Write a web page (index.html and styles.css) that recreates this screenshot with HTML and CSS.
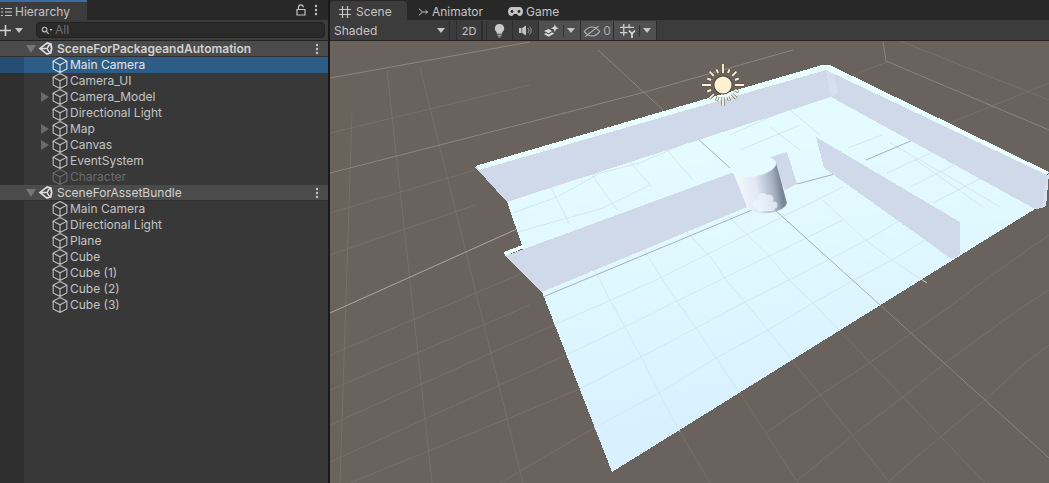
FILE: index.html
```html
<!DOCTYPE html>
<html lang="en">
<head>
<meta charset="utf-8">
<title>Unity Editor</title>
<link rel="stylesheet" href="styles.css">
</head>
<body>
<svg class="defs" width="0" height="0" aria-hidden="true">
  <defs>
    <symbol id="cube" viewBox="1 1 14 14">
      <path d="M8 1.5 14 4.6V11.4L8 14.5 2 11.4V4.6ZM2 4.6 8 7.8 14 4.6M8 7.8V14.5" fill="none" stroke="currentColor" stroke-width=".95"/>
    </symbol>
    <symbol id="unity" viewBox="0 0 16 16">
      <path d="M9.6 1 14.6 2.4 15.6 8 14.4 13.4 9.4 15 .6 8Z M9 3.6 4.4 7.2H9.2L11.6 3.2 9 3.6ZM4.4 8.8 9 12.4 11.6 12.8 9.2 8.8ZM10.6 8 12.8 11.6 13.6 8 12.8 4.4Z" fill="currentColor" fill-rule="evenodd"/>
    </symbol>
    <symbol id="kebab" viewBox="0 0 4 12">
      <circle cx="2" cy="2" r="1.2" fill="currentColor"/><circle cx="2" cy="6" r="1.2" fill="currentColor"/><circle cx="2" cy="10" r="1.2" fill="currentColor"/>
    </symbol>
  </defs>
</svg>
<div class="app">
  <section class="hier">
    <div class="tabs">
      <div class="tab tab-hier">
        <svg class="ico-list" viewBox="0 0 12 10"><path d="M0 1.5H2M4 1.5H11M0 5H2M4 5H11M0 8.5H2M4 8.5H11" stroke="#c4c4c4" stroke-width="1.2" fill="none"/></svg>
        <span>Hierarchy</span>
      </div>
      <div class="tab-tools">
        <svg class="ico-lock" viewBox="0 0 10 12"><path d="M2.5 5V3.2a2.4 2.4 0 0 1 4.8 0M1 5.5H9V11H1Z" fill="none" stroke="#c4c4c4" stroke-width="1.2"/></svg>
        <svg class="ico-kebab"><use href="#kebab"/></svg>
      </div>
    </div>
    <div class="hier-bar">
      <svg class="ico-plus" viewBox="0 0 11 11"><path d="M5.5 0V11M0 5.5H11" stroke="#d2d2d2" stroke-width="1.6"/></svg>
      <i class="caret"></i>
      <div class="search">
        <svg class="ico-search" viewBox="0 0 12 9"><circle cx="3.6" cy="3.6" r="2.3" fill="none" stroke="#c4c4c4" stroke-width="1.1"/><path d="M5.4 5.4 7.6 7.8" stroke="#c4c4c4" stroke-width="1.2"/><path d="M8.4 3H11.6L10 5Z" fill="#c4c4c4"/></svg>
        <span>All</span>
      </div>
    </div>
    <div class="tree">
      <div class="scene-row bold"><i class="open"></i><svg class="ico-unity"><use href="#unity"/></svg><span class="grow">SceneForPackageandAutomation</span><svg class="ico-kebab"><use href="#kebab"/></svg></div>
      <div class="row selected"><i class="slot"></i><svg class="ico-cube"><use href="#cube"/></svg><span>Main Camera</span></div>
      <div class="row"><i class="slot"></i><svg class="ico-cube"><use href="#cube"/></svg><span>Camera_UI</span></div>
      <div class="row"><i class="slot closed"></i><svg class="ico-cube"><use href="#cube"/></svg><span>Camera_Model</span></div>
      <div class="row"><i class="slot"></i><svg class="ico-cube"><use href="#cube"/></svg><span>Directional Light</span></div>
      <div class="row"><i class="slot closed"></i><svg class="ico-cube"><use href="#cube"/></svg><span>Map</span></div>
      <div class="row"><i class="slot closed"></i><svg class="ico-cube"><use href="#cube"/></svg><span>Canvas</span></div>
      <div class="row"><i class="slot"></i><svg class="ico-cube"><use href="#cube"/></svg><span>EventSystem</span></div>
      <div class="row inactive"><i class="slot"></i><svg class="ico-cube"><use href="#cube"/></svg><span>Character</span></div>
      <div class="scene-row"><i class="open"></i><svg class="ico-unity"><use href="#unity"/></svg><span class="grow">SceneForAssetBundle</span><svg class="ico-kebab"><use href="#kebab"/></svg></div>
      <div class="row"><i class="slot"></i><svg class="ico-cube"><use href="#cube"/></svg><span>Main Camera</span></div>
      <div class="row"><i class="slot"></i><svg class="ico-cube"><use href="#cube"/></svg><span>Directional Light</span></div>
      <div class="row"><i class="slot"></i><svg class="ico-cube"><use href="#cube"/></svg><span>Plane</span></div>
      <div class="row"><i class="slot"></i><svg class="ico-cube"><use href="#cube"/></svg><span>Cube</span></div>
      <div class="row"><i class="slot"></i><svg class="ico-cube"><use href="#cube"/></svg><span>Cube (1)</span></div>
      <div class="row"><i class="slot"></i><svg class="ico-cube"><use href="#cube"/></svg><span>Cube (2)</span></div>
      <div class="row"><i class="slot"></i><svg class="ico-cube"><use href="#cube"/></svg><span>Cube (3)</span></div>
    </div>
  </section>

  <section class="scene">
    <div class="tabs">
      <div class="tab tab-scene">
        <svg class="ico-grid" viewBox="0 0 12 12"><path d="M3.5 0V12M8.5 0V12M0 3.5H12M0 8.5H12" stroke="#c4c4c4" stroke-width="1.2"/></svg>
        <span>Scene</span>
      </div>
      <div class="tab tab-anim">
        <svg class="ico-anim" viewBox="0 0 12 10"><path d="M1 1 5.5 5 1 9M5.5 5H11.5M9 2.8 11.5 5 9 7.2" fill="none" stroke="#c4c4c4" stroke-width="1.2"/></svg>
        <span>Animator</span>
      </div>
      <div class="tab tab-game">
        <svg class="ico-game" viewBox="0 0 15 9"><path d="M3.5 0H11.5C13.5 0 15 2 15 4.5S13.5 9 11.5 9C10 9 9.5 7 8.8 7H6.2C5.5 7 5 9 3.5 9 1.5 9 0 7 0 4.5S1.5 0 3.5 0Z" fill="#c4c4c4"/><circle cx="4" cy="4.5" r="1.4" fill="#282828"/><circle cx="11" cy="4.5" r="1.4" fill="#282828"/></svg>
        <span>Game</span>
      </div>
    </div>
    <div class="scene-bar">
      <div class="btn btn-shaded"><span>Shaded</span><i class="caret"></i></div>
      <div class="sep-gap"></div>
      <div class="btn btn-2d"><span>2D</span></div>
      <div class="sep-gap sep-2"></div>
      <div class="btn btn-light"><svg viewBox="0 0 10 13" class="ico-bulb"><path d="M5 0A4.2 4.2 0 0 1 7.6 7.6V9H2.4V7.6A4.2 4.2 0 0 1 5 0ZM3 10H7V11H3ZM4 11.6H6V12.6H4Z" fill="#c8c8c8"/></svg></div>
      <div class="btn btn-audio"><svg viewBox="0 0 13 11" class="ico-audio"><path d="M0 3H2.5V8H0ZM3.2 3 7 .5V10.5L3.2 8Z" fill="#c4c4c4"/><path d="M8.6 3a3 3 0 0 1 0 5M10.4 1.6a5 5 0 0 1 0 7.8" fill="none" stroke="#9a9a9a" stroke-width="1"/></svg></div>
      <div class="btn btn-fx on"><svg viewBox="0 0 14 12" class="ico-fx"><path d="M0 6 4 4.2 7 6 4 8ZM0 8.6 2 7.8 4 9 7 7.2 9 8.2 4 11Z" fill="#d8d8d8"/><path d="M9.5 0 10.4 2.6 13 3.5 10.4 4.4 9.5 7 8.6 4.4 6 3.5 8.6 2.6Z" fill="#d8d8d8"/></svg><b class="vline"></b><i class="caret"></i></div>
      <div class="btn btn-hide on"><svg viewBox="0 0 16 11" class="ico-eye"><path d="M1 6C3 3 5.2 1.8 8 1.8S13 3 15 6C13 8.6 11 10 8 10S3 8.6 1 6ZM2 10.5 14 1" fill="none" stroke="#b4b4b4" stroke-width="1"/></svg><span>0</span></div>
      <div class="btn btn-gizmo on"><svg viewBox="0 0 15 13" class="ico-giz"><path d="M3.5 0V11M8.5 0V4M0 3H13M0 8H7" stroke="#d0d0d0" stroke-width="1.2" fill="none"/><path d="M8.5 6 11.2 9.2 14 6M11.2 9V13" stroke="#e0e0e0" stroke-width="1.5" fill="none"/></svg><b class="vline"></b><i class="caret"></i></div>
    </div>
    <svg class="view" viewBox="330 41 719 442" preserveAspectRatio="none">
      <defs>
        <linearGradient id="floor" gradientUnits="userSpaceOnUse" x1="700" y1="150" x2="740" y2="440">
          <stop offset="0" stop-color="#e4fcff"/><stop offset="1" stop-color="#d8f0ff"/>
        </linearGradient>
        <linearGradient id="cyl" gradientUnits="userSpaceOnUse" x1="738" y1="195" x2="786" y2="188">
          <stop offset="0" stop-color="#f2f8ff"/><stop offset=".4" stop-color="#e2e8f4"/><stop offset=".75" stop-color="#a4b0c2"/><stop offset=".92" stop-color="#74828f"/><stop offset="1" stop-color="#8c98a8"/>
        </linearGradient>
      </defs>
      <rect x="330" y="41" width="719" height="442" fill="#6a625c"/>
      <g class="g-faint">
        <path d="M352 113 340 483M387 70 432 483M420 67 523 483M330 133 530 85M330 213 475 170M330 255 475 205M330 355 530 270M330 390 530 305M330 425 554 325M330 462 566 355M350 483 580 389M500 483 594 428"/>
        <path d="M710 483 680 432M798 483 740 393M890 483 792 360M985 483 839 330M798 480 853 435 903 397 945 363 1018 310 1049 290M890 480 940 437 985 400 1025 363 1049 345M766 433 820 395 869 363 913 332 948 308 985 280 1049 235"/>
        <path d="M900 41 1049 100M950 123 1049 83M853 75 887 62"/>
      </g>
      <g class="g-main">
        <path d="M598 50 663 110M330 173 530 122 645 92 793 50M330 78 530 42M883 42 886 61 1049 130M880 305 1049 458"/>
      </g>
      <path class="g-bright" d="M330 313 517 229"/>
      <polygon points="507,202 831,97 1035,209 612,472 542,292 522,245" fill="url(#floor)" shape-rendering="crispEdges"/>
      <g class="g-floor">
        <path d="M554 325 611 300 656 280 700 258 770 223 843 187M566 355 625 327 677 301 720 280 767 257 843 220M580 389 641 357 696 328 745 302 789 280 867 240 917 210M594 428 659 393 716 358 768 330 813 303 854 280 892 260 950 225"/>
        <path d="M593 267 610 300 625 327 641 357 659 393 680 432M642 247 663 280 677 301 696 328 716 358 740 393M685 230 713 260 726 280 745 302 768 330 792 360M725 213 770 257 789 280 813 303 839 330M823 200 863 238 892 260 927 283M860 183 907 223 950 259"/>
        <path d="M513 213 557 197 597 175M518 232 603 208 650 185M592 175 640 163 693 140M730 135 770 117 823 97M740 150 800 125M848 148 882 135M887 173 933 152M910 187 960 162M933 203 983 177"/>
        <path d="M550 185 570 225M592 175 617 210M630 162 652 187M665 148 693 180M770 127 800 150M790 110 820 135M890 143 960 183 1000 207M913 158 983 207"/>
      </g>
      <g class="g-axis">
        <path d="M543 297 752 210M697 138 730 168M775 210 880 305M797 184 835 174M866 160 913 140"/>
      </g>
      <polygon points="768,158 787,152 797,184 785,190" fill="#cfd9ea" shape-rendering="crispEdges"/>
      <polygon points="475,167 826,68 831,97 507,202" fill="#cfd9ea" shape-rendering="crispEdges"/>
      <polygon points="826,68 1047,175 1042,208 1035,209 831,97" fill="#cfd9ea" shape-rendering="crispEdges"/>
      <polygon points="826,70 834,74 838,93 831,97" fill="#d6dff0" shape-rendering="crispEdges"/>
      <polygon points="1047,175 1049,174 1046,206 1042,208" fill="#d6e0f0" shape-rendering="crispEdges"/>
      <polygon points="475,166 822,65 830,65 1049,172 1047,175 826,70 479,170" fill="#e8feff" shape-rendering="crispEdges"/>
      <polygon points="816,137 960,222 960,255 952,259 824,168" fill="#cfd9ea" shape-rendering="crispEdges"/>
      <polygon points="505,256 734,172 747,207 542,292" fill="#cfd9ea" shape-rendering="crispEdges"/>
      <polygon points="504,252 522,245 524,248 505,256" fill="#e8feff" shape-rendering="crispEdges"/>
      <path d="M733 172 Q745 178 760 173 Q772 169 776 163 L787 203 Q785 210 770 213 Q755 215 747 207Z" fill="url(#cyl)"/>
      <ellipse cx="754" cy="167" rx="22.5" ry="9.5" transform="rotate(-11 754 167)" fill="#e6fbff"/>
      <g fill="#eef7ff" opacity=".75">
        <circle cx="757" cy="204" r="4.5"/><circle cx="763" cy="198" r="5"/><circle cx="769" cy="199" r="4.5"/><circle cx="774" cy="205" r="3.5"/><rect x="757" y="202" width="18" height="9" rx="3"/>
      </g>
      <g transform="translate(723 85)">
        <path class="ray-dark" d="M0-21V-12M0 12V21M-21 0H-12M12 0H21M-13.4-13.4-9.2-9.2M9.2 9.2 13.4 13.4M13.4-13.4 9.2-9.2M-9.2 9.2-13.4 13.4M-15.7-6.5-12-5M12 5 15.7 6.5M15.7-6.5 12-5M-12 5-15.7 6.5M-6.5-15.7-5-12M5 12 6.5 15.7M6.5-15.7 5-12M-5 12-6.5 15.7"/>
        <path class="ray" d="M0-21V-12M0 12V21M-21 0H-12M12 0H21M-13.4-13.4-9.2-9.2M9.2 9.2 13.4 13.4M13.4-13.4 9.2-9.2M-9.2 9.2-13.4 13.4M-15.7-6.5-12-5M12 5 15.7 6.5M15.7-6.5 12-5M-12 5-15.7 6.5M-6.5-15.7-5-12M5 12 6.5 15.7M6.5-15.7 5-12M-5 12-6.5 15.7"/>
        <circle r="9.6" fill="#4a4642"/>
        <circle r="8.6" fill="#fff0cf"/>
      </g>
    </svg>
  </section>
</div>
</body>
</html>
```

FILE: styles.css
```css
* { box-sizing: border-box; }
html, body { margin: 0; height: 100%; }
body { background: #191919; font: 12px/16px Inter, "Liberation Sans", sans-serif; color: #c4c4c4; overflow: hidden; }
.defs { position: absolute; }
i { display: block; font-style: normal; }
svg { display: block; flex: none; }
.app { display: flex; width: 1049px; height: 483px; }

.hier { width: 328px; display: flex; flex-direction: column; background: #383838; }
.scene { flex: 1; min-width: 0; margin-left: 2px; display: flex; flex-direction: column; }

.tabs { height: 20px; display: flex; background: #282828; flex: none; }
.tab { display: flex; align-items: center; height: 20px; padding-top: 3px; }
.tab-hier { width: 87px; background: #3c3c3c; border-top: 2px solid #3a6ea5; padding-left: 1px; padding-top: 1px; gap: 2px; }
.ico-list { width: 12px; height: 10px; }
.tab-tools { margin-left: auto; display: flex; align-items: center; gap: 8px; padding-right: 10px; }
.ico-lock { width: 10px; height: 12px; }
.ico-kebab { width: 4px; height: 12px; color: #c4c4c4; }

.hier-bar { height: 21px; display: flex; align-items: center; background: #3c3c3c; border-bottom: 1px solid #232323; }
.ico-plus { width: 11px; height: 11px; margin-left: 0; }
.caret { width: 0; height: 0; border-left: 4px solid transparent; border-right: 4px solid transparent; border-top: 5px solid #c4c4c4; }
.hier-bar .caret { margin-left: 4px; }
.search { margin-left: 13px; width: 289px; height: 16px; background: #2a2a2a; border: 1px solid #212121; border-radius: 4px; display: flex; align-items: center; padding-left: 4px; gap: 2px; color: #6f6f6f; }
.ico-search { width: 12px; height: 9px; }

.tree { flex: 1; background: linear-gradient(90deg, #2f2f2f 24px, #383838 24px); }
.row { height: 16px; display: flex; align-items: center; padding-left: 40px; }
.slot { width: 12px; height: 16px; position: relative; }
.slot.closed::before { content: ""; display: block; width: 0; height: 0; margin: 3px 0 0 1px; border-top: 5px solid transparent; border-bottom: 5px solid transparent; border-left: 8px solid #6a6a6a; }
.ico-cube { width: 16px; height: 16px; margin-right: 2px; }
.row.selected { background: linear-gradient(90deg, #264e72 24px, #2c5d87 24px); color: #e6e6e6; }
.row.inactive { color: #6c6c6c; }
.scene-row { height: 16px; display: flex; align-items: center; padding-left: 26px; padding-right: 9px; background: #4b4b4b; border-bottom: 1px solid #2f2f2f; color: #d2d2d2; }
.scene-row.bold span { font-weight: 600; }
.open { width: 0; height: 0; border-left: 5px solid transparent; border-right: 5px solid transparent; border-top: 8px solid #767676; margin-right: 2px; }
.ico-unity { width: 15px; height: 15px; color: #dcdcdc; margin-right: 4px; }
.grow { flex: 1; }

.tab-scene { width: 77px; background: #3c3c3c; margin-top: 1px; height: 19px; padding-left: 9px; padding-top: 2px; gap: 5px; border-radius: 3px 3px 0 0; }
.ico-grid { width: 12px; height: 12px; }
.tab-anim { margin-left: 11px; gap: 4px; }
.ico-anim { width: 10px; height: 10px; }
.tab-game { margin-left: 25px; gap: 3px; }
.ico-game { width: 15px; height: 9px; }

.scene-bar { height: 21px; background: #3c3c3c; border-top: 1px solid #3c3c3c; border-bottom: 1px solid #232323; display: flex; align-items: stretch; flex: none; }
.btn { display: flex; align-items: center; justify-content: center; background: #3c3c3c; border-right: 1px solid #2c2c2c; }
.btn.on { background: #505050; }
.btn-shaded { width: 120px; justify-content: space-between; padding: 0 4px; border-right: 1px solid #2c2c2c; }
.sep-gap { width: 7px; border-right: 1px solid #2c2c2c; }
.sep-2 { width: 5px; border-left: 1px solid #2c2c2c; }
.btn-2d { width: 25px; font-size: 11px; }
.btn-light { width: 26px; }
.btn-audio { width: 26px; }
.btn-fx { width: 42px; gap: 3px; }
.btn-hide { width: 33px; gap: 2px; color: #a8a8a8; }
.btn-gizmo { width: 43px; gap: 3px; }
.vline { width: 1px; height: 12px; background: #333; }
.ico-bulb { width: 11px; height: 14px; }
.ico-audio { width: 13px; height: 11px; }
.ico-fx { width: 16px; height: 14px; }
.ico-eye { width: 18px; height: 12px; }
.ico-giz { width: 16px; height: 14px; }

.view { flex: 1; min-height: 0; width: 100%; }
.g-faint path { fill: none; stroke: #7a736e; stroke-width: .8; }
.g-main path { fill: none; stroke: #8f8985; stroke-width: .9; }
.g-bright { fill: none; stroke: #aaa5a0; stroke-width: 1; }
.g-floor path { fill: none; stroke: #d2e4ec; stroke-width: .9; }
.g-axis path { fill: none; stroke: #a7b0b6; stroke-width: 1; }
.ray-dark { fill: none; stroke: #55504b; stroke-width: 3; }
.ray { fill: none; stroke: #fff0cf; stroke-width: 1.9; }
```
